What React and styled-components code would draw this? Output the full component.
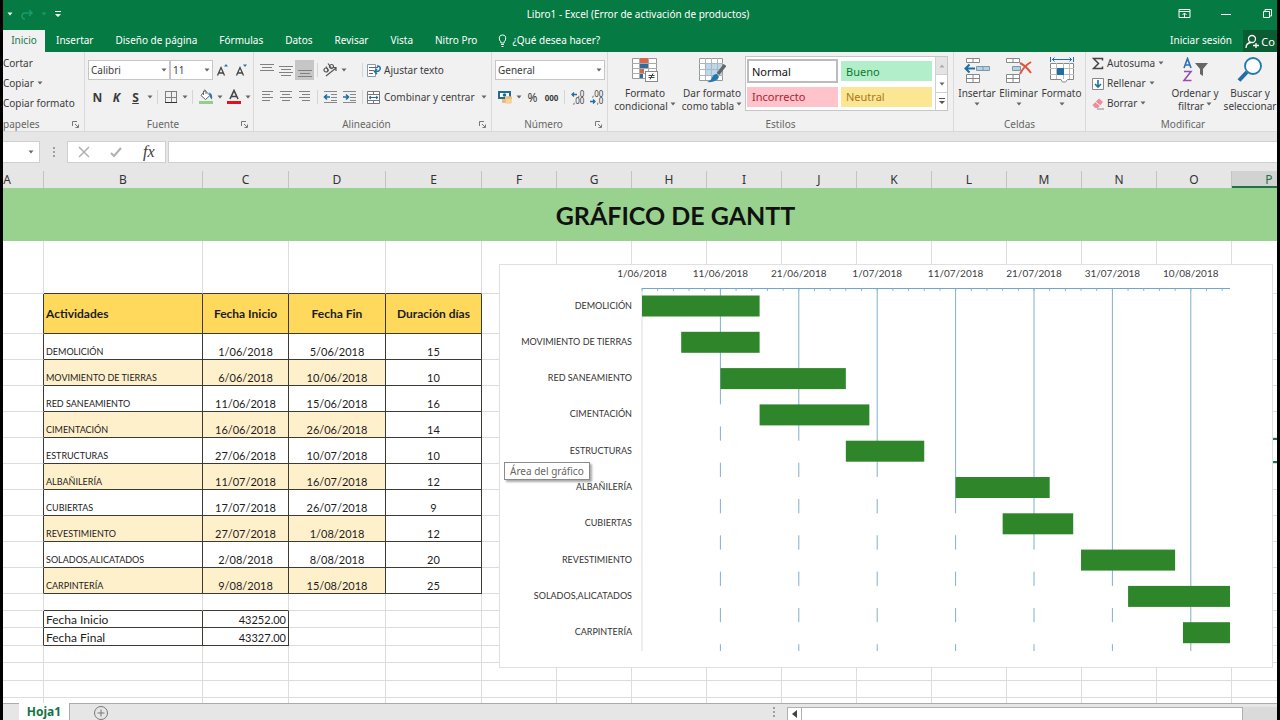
import styled, { createGlobalStyle, css } from 'styled-components';
import { useState } from 'react';

const GlobalStyle = createGlobalStyle`
  * {
    box-sizing: border-box;
  }

  body {
    margin: 0;
    background: #000;
    font-family: "Noto Sans", "Open Sans", sans-serif;
    font-size: 10px;
    color: #3c3c3c;
  }

  button, select, input {
    font: inherit;
    color: inherit;
  }
`;

const Window = styled.div`
  display: flex;
  flex-direction: column;
  height: 100vh;
  overflow: hidden;
  border: 0 solid #000;
  border-width: 0 3px;
  background: #e6e6e6;
`;

const PlainButton = styled.button`
  display: inline-flex;
  align-items: center;
  justify-content: center;
  padding: 0;
  border: 0;
  background: transparent;
  white-space: nowrap;
`;

/* title bar and tabs */

const TitleBar = styled.header`
  display: grid;
  grid-template-columns: 1fr auto 1fr;
  align-items: center;
  flex: none;
  height: 30px;
  padding: 0 4px 2px 0;
  background: #057a43;
  color: #fff;
`;

const QuickAccess = styled.div`
  display: flex;
  align-items: center;
  gap: 8px;
  padding-left: 4px;
`;

const WindowTitle = styled.h1`
  margin: 0;
  font-size: 10px;
  font-weight: normal;
`;

const WindowControls = styled.div`
  display: flex;
  justify-content: flex-end;
  gap: 28px;
`;

const TabBar = styled.nav`
  display: flex;
  flex: none;
  height: 22px;
  background: #057a43;
  color: #fff;
`;

const Tab = styled(PlainButton)`
  padding: 0 11px 2px;

  ${(props) => props.$active && css`
    width: 42px;
    padding: 0 0 2px;
    background: #f1f1f1;
    color: #18794a;
  `}
`;

const TellMe = styled(PlainButton)`
  gap: 5px;
  margin: 0 auto 0 10px;
  padding-bottom: 2px;
`;

const ShareButton = styled(PlainButton)`
  gap: 2px;
  width: 34px;
  background: #0b5c33;
  font-size: 11px;
`;

/* ribbon */

const Ribbon = styled.div`
  display: flex;
  flex: none;
  height: 80px;
  overflow: hidden;
  background: #f1f1f1;
  border-bottom: 1px solid #d8d8d8;
`;

const GroupBox = styled.section`
  display: flex;
  flex-direction: column;
  flex: ${(props) => (props.$width ? `0 0 ${props.$width}px` : '1 0 auto')};
  min-width: 0;
  padding: 1px 3px 0;
  border-right: 1px solid #d9d9d9;

  &:first-child {
    padding-left: 0;
    text-align: left;
  }

  &:last-child {
    padding-right: 0;
    border-right: 0;
  }
`;

const GroupContent = styled.div`
  display: flex;
  flex: 1;
`;

const GroupFooter = styled.div`
  display: flex;
  align-items: center;
  height: 14px;
  line-height: 14px;
  color: #666;

  button {
    width: 12px;
  }
`;

const GroupLabel = styled.span`
  flex: 1;
  text-align: ${(props) => (props.$start ? 'left' : 'center')};
`;

const Stack = styled.div`
  display: flex;
  flex-direction: column;
  justify-content: space-between;
  flex: 1;
  padding: 7px 0 10px;
`;

const List = styled.div`
  display: flex;
  flex-direction: column;
  flex: 1;
  padding-left: ${(props) => props.$indent || 0}px;
`;

const ToolRow = styled.div`
  display: flex;
  align-items: center;
  height: 20px;
`;

const Tool = styled(PlainButton)`
  flex: none;
  width: ${(props) => props.$width || 19}px;
  height: 20px;
  background: ${(props) => (props.$pressed ? '#c6c6c6' : 'transparent')};
`;

const SplitTool = styled(Tool)`
  justify-content: flex-start;
  gap: 3px;
  padding-left: 1px;
`;

const LetterTool = styled(Tool)`
  font-size: 12px;
  font-weight: ${(props) => (props.$bold ? 'bold' : 'normal')};
  font-style: ${(props) => (props.$italic ? 'italic' : 'normal')};
  text-decoration: ${(props) => (props.$underline ? 'underline' : 'none')};
`;

const ThousandsTool = styled(Tool)`
  font-size: 8px;
  font-weight: bold;
`;

const ListTool = styled(PlainButton)`
  gap: 3px;
  justify-content: flex-start;
  height: 20px;
`;

const Divider = styled.span`
  flex: none;
  width: 1px;
  height: 14px;
  margin: 0 3px;
  background: #d5d5d5;
`;

const SelectBox = styled.label`
  display: inline-grid;
  align-items: center;
  flex: none;
  width: ${(props) => props.$width}px;
  height: 20px;

  select, svg {
    grid-area: 1 / 1;
  }

  select {
    width: 100%;
    height: 20px;
    padding: 0 2px;
    border: 1px solid #c6c6c6;
    border-radius: 0;
    background: #fff;
    appearance: none;
  }

  svg {
    justify-self: end;
    margin-right: 3px;
    pointer-events: none;
  }
`;

const LargeTool = styled(PlainButton)`
  flex: none;
  flex-direction: column;
  justify-content: flex-start;
  width: ${(props) => props.$width}px;
  padding-top: 4px;

  svg:first-child {
    margin-bottom: 3px;
  }
`;

const LargeLine = styled.span`
  display: flex;
  align-items: center;
  gap: 2px;
  height: 13px;
`;

const Gallery = styled.div`
  display: grid;
  grid-template-columns: 1fr 1fr 12px;
  grid-template-rows: 1fr 1fr;
  gap: 2px 3px;
  width: 203px;
  height: 55px;
  margin-top: 3px;
  padding: 2px 0 2px 1px;
  border: 1px solid #c6c6c6;
  background: #fff;
`;

const styleColors = {
  normal: css`background: #fff; color: #111; box-shadow: 0 0 0 2px #bcbcbc inset;`,
  good: css`background: #b3eecb; color: #0b7a2c;`,
  bad: css`background: #ffc3cb; color: #b3202e;`,
  neutral: css`background: #fbe694; color: #a9791b;`,
};

const StyleItem = styled(PlainButton)`
  justify-content: flex-start;
  align-self: center;
  height: ${(props) => (props.$kind === 'normal' ? 24 : 20)}px;
  padding: 0 5px;
  font-size: 11px;
  ${(props) => styleColors[props.$kind]}
`;

const GalleryScroll = styled.div`
  display: flex;
  flex-direction: column;
  grid-column: 3;
  grid-row: 1 / 3;
  margin: -2px 0;
  border-left: 1px solid #d0d0d0;
`;

const ScrollButton = styled(PlainButton)`
  flex: 1;
  border-bottom: 1px solid #d0d0d0;
  background: ${(props) => (props.disabled ? '#e4e4e4' : '#fff')};

  &:last-child {
    border-bottom: 0;
  }
`;

/* formula bar */

const FormulaBar = styled.div`
  display: flex;
  align-items: center;
  flex: none;
  height: 39px;
`;

const NameBox = styled(PlainButton)`
  justify-content: flex-end;
  width: 37px;
  height: 22px;
  padding-right: 5px;
  border: 1px solid #cfcfcf;
  border-left: 0;
  background: #fff;
`;

const Grip = styled.span`
  display: flex;
  align-items: center;
  justify-content: center;
  width: 27px;
`;

const FormulaButtons = styled.div`
  display: flex;
  width: 99px;
  height: 22px;
  border: 1px solid #cfcfcf;
  background: #fff;

  button {
    flex: 1;
  }
`;

const FxButton = styled(PlainButton)`
  font-family: "Liberation Serif", serif;
  font-size: 16px;
  font-style: italic;
`;

const FormulaInput = styled.input`
  flex: 1;
  min-width: 0;
  height: 22px;
  margin-left: 2px;
  border: 1px solid #cfcfcf;
  border-right: 0;
  background: #fff;
`;

/* worksheet */

const SheetArea = styled.main`
  position: relative;
  flex: 1;
  min-height: 0;
  overflow: hidden;
  background: #fff;
  font-family: Lato, "Open Sans", sans-serif;
  color: #1c1c1c;
`;

// scrolled a little to the right, so column A starts outside the window
const Grid = styled.table`
  width: 1336px;
  margin-left: -32px;
  table-layout: fixed;
  border-collapse: separate;
  border-spacing: 0;
`;

const ColumnHeader = styled.th`
  height: 17px;
  padding: 0;
  border-right: 1px solid #c3c3c3;
  background: #e6e6e6;
  font-family: "Noto Sans", sans-serif;
  font-size: 12px;
  font-weight: normal;
  line-height: 16px;
  color: #333;

  ${(props) => props.$selected && css`
    background: #d2d2d2;
    color: #217346;
    box-shadow: 0 -2px 0 #217346 inset;
  `}
`;

const TitleCell = styled.td`
  height: 53px;
  padding: 0;
  background: #99d18f;
  font-size: 25px;
  font-weight: bold;
  text-align: center;
  color: #111;
`;

const Cell = styled.td`
  height: ${(props) => props.$height}px;
  padding: 0 2px;
  border-right: 1px solid ${(props) => (props.$darkRight ? '#3c3a33' : '#dcdcdc')};
  border-bottom: 1px solid ${(props) => (props.$darkBottom ? '#3c3a33' : '#dcdcdc')};
  background: ${(props) => props.$fill || '#fff'};
  font-size: ${(props) => props.$size || 12}px;
  font-weight: ${(props) => (props.$bold ? 'bold' : 'normal')};
  line-height: 15px;
  text-align: ${(props) => props.$align || 'left'};
  vertical-align: ${(props) => (props.$bold ? 'middle' : 'bottom')};
  white-space: nowrap;
  ${(props) => props.$active && css`box-shadow: 0 0 0 2px #217346 inset;`}
`;

const ChartFrame = styled.figure`
  position: absolute;
  left: 496px;
  top: 93px;
  width: 774px;
  height: 404px;
  margin: 0;
  border: 1px solid #e0e0e0;
  background: #fff;

  svg {
    display: block;
  }
`;

const AxisText = styled.text`
  font-size: 10px;
  fill: #404040;
`;

const CategoryText = styled.text`
  font-size: 9px;
  fill: #333;
`;

const Tooltip = styled.div`
  position: absolute;
  left: 501px;
  top: 291px;
  height: 18px;
  padding: 0 5px;
  border: 1px solid #8a8a8a;
  background: #fff;
  box-shadow: 2px 2px 2px #0005;
  font-family: "Noto Sans", sans-serif;
  font-size: 10px;
  line-height: 16px;
  color: #666;
`;

/* sheet tabs */

const SheetBar = styled.footer`
  display: flex;
  flex: none;
  height: 17px;
  border-top: 1px solid #ababab;
`;

const SheetTab = styled(PlainButton)`
  width: 51px;
  margin: -1px 23px 0 16px;
  background: #fff;
  border-right: 1px solid #ababab;
  font-size: 12px;
  font-weight: bold;
  color: #127345;
`;

const Spacer = styled.span`
  flex: 1;
`;

const ScrollBar = styled.div`
  display: flex;
  width: 490px;
  margin-top: 3px;
  background: #dadada;
`;

const ScrollThumb = styled.span`
  width: 442px;
  border: 1px solid #b0b0b0;
  border-bottom: 0;
  background: #fff;
`;

const ScrollStep = styled(PlainButton)`
  width: 14px;
  border: 1px solid #b0b0b0;
  border-width: 1px 0 0 1px;
  background: #fff;
`;

const Arrow = ({ color = '#666', up }) => (
  <svg width="6" height="4" viewBox="0 0 6 4" aria-hidden="true">
    <path d={up ? 'M0.5 3.5h5L3 0.5z' : 'M0.5 0.5h5L3 3.5z'} fill={color} />
  </svg>
);

const Launcher = () => (
  <svg width="7" height="7" viewBox="0 0 7 7" fill="none" stroke="#777">
    <path d="M0.5 5V0.5H5M3 3l3 3M6.5 3.5v3h-3" />
  </svg>
);

const Dots = () => (
  <svg width="2" height="10" fill="#a0a0a0">
    <rect x="0" y="0" width="2" height="2" />
    <rect x="0" y="4" width="2" height="2" />
    <rect x="0" y="8" width="2" height="2" />
  </svg>
);

// horizontal strokes given as [x, width], one for each line of text
const LinesIcon = ({ lines, top = 1, gap = 3 }) => (
  <svg width="14" height="14" fill="#808080">
    {lines.map(([x, w], i) => <rect key={i} x={x} y={top + i * gap} width={w} height="1" />)}
  </svg>
);

const GrowIcon = ({ down }) => (
  <svg width="15" height="15" fill="none">
    <path d="M2.500 12.500L6 4.500L9.500 12.500M4 10h4" stroke="#444" strokeWidth="1.300" />
    <path d={down ? 'M9 1.500h4l-2 2.500z' : 'M9 3.500h4l-2-2.500z'} fill="#2f6f9f" />
  </svg>
);

const BordersIcon = () => (
  <svg width="14" height="14" fill="none" stroke="#808080">
    <path d="M1 1.500h12M1 7.500h12M1.500 1v12M7.500 1v12M12.500 1v12" />
    <path d="M1 12.500h12" stroke="#333" />
  </svg>
);

const FillIcon = () => (
  <svg width="16" height="16" fill="none">
    <path d="M7 1.500L12 6.500 7.500 10.500 3 6.500z" fill="#fff" stroke="#666" />
    <path d="M5.500 6V2q1-2 2.500 0v3" stroke="#666" />
    <path d="M11 3.500q4 1 3 7q-2-1-2.500-5" fill="#2e75b6" />
    <rect x="1" y="12" width="14" height="3" fill="#92cf87" />
  </svg>
);

const FontColorIcon = () => (
  <svg width="16" height="16" fill="none">
    <path d="M4 10L8 1.500L12 10M5.500 7.500h5" stroke="#444" strokeWidth="1.600" />
    <rect x="1" y="12" width="14" height="3" fill="#e0121b" />
  </svg>
);

const OrientationIcon = () => (
  <svg width="16" height="16" fill="none" stroke="#555" strokeWidth="1.200">
    <circle cx="4" cy="8" r="2" />
    <path d="M4 4.500l2.500 4.500M6 1.500l4 5.500" />
    <circle cx="9.500" cy="4.500" r="2" />
    <path d="M4 14L14 6M10.500 5.500h3.500v3.500" />
  </svg>
);

const IndentIcon = ({ right }) => (
  <svg width="15" height="14" fill="none" stroke="#888">
    <path d="M1 1.500h13M8 4.500h6M8 7.500h6M8 10.500h6M1 12.500h13" />
    <path d={right ? 'M1 7h5M4 4.500L6.500 7 4 9.500' : 'M7 7H2M4 4.500L1.500 7 4 9.500'} stroke="#1c6ea4" strokeWidth="1.600" />
  </svg>
);

const WrapIcon = () => (
  <svg width="15" height="15" fill="none">
    <path d="M1.500 1.500h8v12h-8z" fill="#fff" stroke="#8a9aa5" />
    <path d="M3 4.500h9M3 7.500h5M3 10.500h4" stroke="#667" />
    <path d="M11 3q4 0 3 3.500q-1 2.500-5 2M11 6L8.500 8.500l2.500 2.500" stroke="#1c6ea4" strokeWidth="1.500" />
  </svg>
);

const MergeIcon = () => (
  <svg width="15" height="15" fill="none">
    <path d="M1.500 1.500h12v12h-12zM1 4.500h13M1 10.500h13M7.500 1v3M7.500 11v3" fill="#fff" stroke="#777" />
    <path d="M3 7.500h9M5 6L3 7.500 5 9M10 6l2 1.500L10 9" stroke="#1c6ea4" />
  </svg>
);

const CurrencyIcon = () => (
  <svg width="16" height="16">
    <rect x="1" y="2" width="13" height="8" fill="#1f6c96" />
    <rect x="3" y="4" width="9" height="4" fill="#fff" />
    <circle cx="7.500" cy="6" r="1.800" fill="#1f6c96" />
    <path d="M8 8h7v6q-3.500 2-7 0z" fill="#f7d3a1" />
    <ellipse cx="11.500" cy="8.500" rx="3.500" ry="1.500" fill="#edbb7b" />
    <path d="M5 10h4v4H5z" fill="#edbb7b" />
  </svg>
);

const DecimalsText = styled.span`
  display: grid;
  font-size: 8px;
  line-height: 7px;
  text-align: right;

  svg {
    margin-right: 1px;
  }
`;

const TinyArrow = ({ right }) => (
  <svg width="6" height="5" fill="none" stroke="#1c6ea4" strokeWidth="1.300">
    <path d={right ? 'M0 2.500h5M3 0.500l2 2-2 2' : 'M6 2.500H1M3 0.500l-2 2 2 2'} />
  </svg>
);

const ConditionalIcon = () => (
  <svg width="28" height="26" fill="none">
    <path d="M1.500 1.500h24v20h-24z" fill="#fff" stroke="#999" />
    <path d="M9 1h5v5H9zM9 11h4v5H9z" fill="#d9654b" />
    <path d="M9 6h8v5H9zM9 16h3v5H9z" fill="#2b6f9e" />
    <path d="M14 1h3v5h-3z" fill="#d9654b" />
    <path d="M1 6.500h25M1 11.500h25M1 16.500h25M8.500 1v20M17.500 1v20" stroke="#aaa" />
    <rect x="14.500" y="14.500" width="12" height="10" fill="#fff" stroke="#888" />
    <path d="M17.500 18.500h6M17.500 20.500h6M22 16.500l-3 6" stroke="#444" />
  </svg>
);

const TableFormatIcon = () => (
  <svg width="28" height="26" fill="none">
    <path d="M1.500 1.500h23v22h-23z" fill="#fff" stroke="#999" />
    <path d="M8 7h16v12H8z" fill="#bcd7ea" />
    <path d="M1 6.500h24M1 12.500h24M1 18.500h24M7.500 1v22M13.500 1v22M19.500 1v22" stroke="#a9b8c3" />
    <path d="M27 8l-7 9" stroke="#666" strokeWidth="3.500" />
    <path d="M19 17q-4 0-5 3.500T9 25q9 1 12-5z" fill="#1f78b4" />
  </svg>
);

const InsertIcon = () => (
  <svg width="28" height="26" fill="none">
    <path d="M3.500 1.500h13v4h-13zM10 1v4M3.500 17.500h13v8h-13zM3 21.500h14M10 17v8" fill="#fff" stroke="#888" />
    <path d="M13.500 9.500h13v4h-13zM20 9v5" fill="#b5d0e2" stroke="#7b98aa" />
    <path d="M12 11.500H2.500M6.500 7.500l-4 4 4 4" stroke="#1f6fa5" strokeWidth="2" />
  </svg>
);

const DeleteIcon = () => (
  <svg width="28" height="26" fill="none">
    <path d="M1.500 1.500h13v4h-13zM8 1v4M1.500 17.500h13v8h-13zM1 21.500h14M8 17v8" fill="#fff" stroke="#888" />
    <path d="M7.500 9.500h8v4h-8z" fill="#b5d0e2" stroke="#7b98aa" />
    <path d="M15 6q6 3 11 10M26 5q-7 4-11 12" stroke="#e0583b" strokeWidth="2" />
  </svg>
);

const FormatIcon = () => (
  <svg width="28" height="26" fill="none">
    <path d="M2.500 6.500h23v16h-6l-2 2.500h-3l-1.500-2.500h-10.500z" fill="#fff" stroke="#888" />
    <path d="M2 11.500h24M2 17.500h24M8.500 6v16M15.500 6v16M21.500 6v16" stroke="#bbb" />
    <rect x="9" y="11" width="7" height="7" fill="#1f6fa5" />
    <path d="M4 2.500h20M6.500 0.500l-2 2 2 2M21.500 0.500l2 2-2 2M2.500 0v5M25.500 0v5" stroke="#1f6fa5" />
  </svg>
);

const SigmaIcon = () => (
  <svg width="12" height="13" fill="none" stroke="#444" strokeWidth="1.500">
    <path d="M10.500 3.500V1.500H1.500l5 5-5 5h9v-2" />
  </svg>
);

const FillDownIcon = () => (
  <svg width="12" height="13" fill="none">
    <path d="M0.500 1.500h11v11H0.500z" fill="#fff" stroke="#888" />
    <path d="M6 3v7M3 7l3 3 3-3" stroke="#1f6fa5" strokeWidth="1.600" />
  </svg>
);

const EraserIcon = () => (
  <svg width="12" height="13" fill="none">
    <path d="M7 1.500l4 3.500-5 6H3L0.500 8z" fill="#f28a9b" />
    <path d="M3.500 5L8 8.500" stroke="#fff" />
    <path d="M5 12h7" stroke="#888" />
  </svg>
);

const SortIcon = () => (
  <svg width="28" height="26" fill="none">
    <path d="M3 11L6.500 1.500L10 11M4 8h5" stroke="#2a72b0" strokeWidth="1.600" />
    <path d="M3 14.500h7L3 23.500h7.500" stroke="#9a4bb0" strokeWidth="1.600" />
    <path d="M14 6h13l-5 6v7l-3-2v-5z" fill="#666" />
  </svg>
);

const FindIcon = () => (
  <svg width="28" height="26" fill="none">
    <path d="M11 15L3 23.500" stroke="#1f6fa5" strokeWidth="4" />
    <circle cx="17" cy="9" r="8" fill="#fff" stroke="#1f7bb0" strokeWidth="1.800" />
  </svg>
);

const Group = ({ label, width, start, launcher, children }) => (
  <GroupBox $width={width} aria-label={label}>
    <GroupContent>{children}</GroupContent>
    <GroupFooter>
      <GroupLabel $start={start}>{label}</GroupLabel>
      {launcher && <PlainButton aria-label={`Opciones de ${label}`}><Launcher /></PlainButton>}
    </GroupFooter>
  </GroupBox>
);

const Dropdown = ({ label, width, options }) => (
  <SelectBox $width={width}>
    <select aria-label={label} defaultValue={options[0]}>
      {options.map((el) => <option key={el}>{el}</option>)}
    </select>
    <Arrow />
  </SelectBox>
);

const ArrowTool = () => <Tool $width={9} aria-label="Más opciones"><Arrow /></Tool>;

const Large = ({ icon, lines, width }) => (
  <LargeTool $width={width}>
    {icon}
    {lines.map((line, i) => (
      <LargeLine key={i}>
        {line}
        {i === lines.length - 1 && <Arrow />}
      </LargeLine>
    ))}
  </LargeTool>
);

const tabs = ['Inicio', 'Insertar', 'Diseño de página', 'Fórmulas', 'Datos', 'Revisar', 'Vista', 'Nitro Pro'];

const columns = [
  ['A', 73], ['B', 159], ['C', 86], ['D', 97], ['E', 96], ['F', 75], ['G', 75], ['H', 75],
  ['I', 75], ['J', 75], ['K', 75], ['L', 75], ['M', 75], ['N', 75], ['O', 75], ['P', 75],
];

const tasks = [
  { name: 'DEMOLICIÓN', start: '1/06/2018', end: '5/06/2018', days: 15, offset: 0 },
  { name: 'MOVIMIENTO DE TIERRAS', start: '6/06/2018', end: '10/06/2018', days: 10, offset: 5 },
  { name: 'RED SANEAMIENTO', start: '11/06/2018', end: '15/06/2018', days: 16, offset: 10 },
  { name: 'CIMENTACIÓN', start: '16/06/2018', end: '26/06/2018', days: 14, offset: 15 },
  { name: 'ESTRUCTURAS', start: '27/06/2018', end: '10/07/2018', days: 10, offset: 26 },
  { name: 'ALBAÑILERÍA', start: '11/07/2018', end: '16/07/2018', days: 12, offset: 40 },
  { name: 'CUBIERTAS', start: '17/07/2018', end: '26/07/2018', days: 9, offset: 46 },
  { name: 'REVESTIMIENTO', start: '27/07/2018', end: '1/08/2018', days: 12, offset: 56 },
  { name: 'SOLADOS,ALICATADOS', start: '2/08/2018', end: '8/08/2018', days: 20, offset: 62 },
  { name: 'CARPINTERÍA', start: '9/08/2018', end: '15/08/2018', days: 25, offset: 69 },
];

const axisDates = ['1/06/2018', '11/06/2018', '21/06/2018', '1/07/2018', '11/07/2018', '21/07/2018', '31/07/2018', '10/08/2018'];

// every row under the title: its height and the cells that hold something
const rows = [
  { height: 53, cells: [] },
  { height: 40, bold: true, cells: ['Actividades', 'Fecha Inicio', 'Fecha Fin', 'Duración días'] },
  ...tasks.map((task, i) => ({
    height: 26,
    task: true,
    shaded: i % 2 === 1,
    cells: [task.name, task.start, task.end, task.days],
  })),
  { height: 17, cells: [] },
  { height: 17, cells: ['Fecha Inicio', '43252.00'] },
  { height: 18, cells: ['Fecha Final', '43327.00'] },
  { height: 17, cells: [] },
  { height: 18, cells: [] },
  { height: 17, cells: [] },
  { height: 18, cells: [] },
];

const getFill = (row, col) => {
  if (col < 1 || col > row.cells.length) return '#fff';
  if (row.bold) return '#ffd95c';
  return row.shaded && col < 4 ? '#fff0cc' : '#fff';
};

const getAlign = (row, col) => {
  if (col === 1) return 'left';
  return row.cells.length === 2 ? 'right' : 'center';
};

const getSize = (row, col) => {
  if (row.bold) return 12;
  if (col > 1) return 11;
  return row.task ? 9 : 12;
};

const Worksheet = () => (
  <Grid>
    <colgroup>
      {columns.map(([name, width]) => <col key={name} style={{ width }} />)}
    </colgroup>
    <thead>
      <tr>
        {columns.map(([name]) => <ColumnHeader key={name} $selected={name === 'P'}>{name}</ColumnHeader>)}
      </tr>
    </thead>
    <tbody>
      <tr>
        <TitleCell />
        <TitleCell colSpan={15}>GRÁFICO DE GANTT</TitleCell>
      </tr>
      {rows.map((row, r) => {
        const below = rows[r + 1] ? rows[r + 1].cells.length : 0;
        return (
          <tr key={r}>
            {columns.map(([name], col) => (
              <Cell
                key={name}
                $height={row.height}
                $bold={row.bold}
                $size={getSize(row, col)}
                $fill={getFill(row, col)}
                $align={getAlign(row, col)}
                $darkRight={row.cells.length > 0 && col <= row.cells.length}
                $darkBottom={col > 0 && col <= Math.max(row.cells.length, below)}
                $active={name === 'P' && row.cells[0] === 'ESTRUCTURAS'}
              >
                {col > 0 ? row.cells[col - 1] : null}
              </Cell>
            ))}
          </tr>
        );
      })}
    </tbody>
  </Grid>
);

const GanttChart = () => {
  const left = 142;
  const top = 23;
  const width = 588;
  const day = width / 75;
  const step = 36.3;

  return (
    <ChartFrame>
      <svg width="772" height="402" role="img" aria-label="Gráfico de Gantt">
        {axisDates.map((date, i) => (
          <g key={date}>
            <AxisText x={left + i * 10 * day} y="12" textAnchor="middle">{date}</AxisText>
            <path d={`M${left + i * 10 * day} ${top}V${top + 363}`} stroke={i === 0 ? '#dcdcdc' : '#7fb0cc'} />
          </g>
        ))}
        {Array.from({ length: 38 }, (_, i) => (
          <path key={i} d={`M${left + i * 2 * day} ${top}v3`} stroke="#8db8d2" />
        ))}
        <path d={`M${left} ${top + 0.5}h${width}`} stroke="#6fa8cc" />
        {tasks.map((task, i) => {
          const y = top + 7.5 + i * step;
          return (
            <g key={task.name}>
              <CategoryText x={left - 10} y={y + 13} textAnchor="end">{task.name}</CategoryText>
              <rect x={left + 1} y={y} width={Math.max(task.offset * day - 2, 0)} height="22" fill="#fff" />
              <rect
                x={left + task.offset * day}
                y={y}
                width={Math.min(task.days, 75 - task.offset) * day}
                height="21"
                fill="#2f862a"
              />
            </g>
          );
        })}
      </svg>
    </ChartFrame>
  );
};

const App = () => {
  const [currentTab, setCurrentTab] = useState(0);

  return (
    <Window>
      <GlobalStyle />
      <TitleBar>
        <QuickAccess>
          <PlainButton aria-label="Deshacer"><Arrow color="#fff" /></PlainButton>
          <PlainButton aria-label="Rehacer">
            <svg width="12" height="11" fill="none" stroke="#1b9a6c" strokeWidth="1.500">
              <path d="M11 4H4Q1 4 1 7t3 3M8 1l3 3-3 3" />
            </svg>
          </PlainButton>
          <Arrow color="#2a9465" />
          <PlainButton aria-label="Personalizar">
            <svg width="6" height="7" fill="#fff"><path d="M0 0h6v1H0zM0 3h6L3 6z" /></svg>
          </PlainButton>
        </QuickAccess>
        <WindowTitle>Libro1 - Excel (Error de activación de productos)</WindowTitle>
        <WindowControls>
          <PlainButton aria-label="Opciones de presentación">
            <svg width="13" height="10" fill="none" stroke="#fff">
              <path d="M1 0.500h11v8H1zM1 2.500h11M6.500 8V4M4.500 6l2-2 2 2" />
            </svg>
          </PlainButton>
          <PlainButton aria-label="Minimizar">
            <svg width="14" height="10" stroke="#fff"><path d="M2 5.500h10" /></svg>
          </PlainButton>
          <PlainButton aria-label="Restaurar">
            <svg width="12" height="10" fill="none" stroke="#fff">
              <path d="M2.500 2.500h6v6h-6zM4 2V0.500h6.500V7H9" />
            </svg>
          </PlainButton>
        </WindowControls>
      </TitleBar>
      <TabBar>
        {tabs.map((el, index) => (
          <Tab key={el} $active={index === currentTab} onClick={() => setCurrentTab(index)}>{el}</Tab>
        ))}
        <TellMe>
          <svg width="9" height="13" fill="none" stroke="#fff">
            <path d="M3 9Q3 7.500 1.500 6Q0.500 1 4.500 1T7.500 6Q6 7.500 6 9zM3 10.500h3M3.500 12.500h2" />
          </svg>
          ¿Qué desea hacer?
        </TellMe>
        <Tab>Iniciar sesión</Tab>
        <ShareButton>
          <svg width="14" height="15" fill="none" stroke="#fff" strokeWidth="1.300">
            <circle cx="7" cy="5" r="3.500" />
            <path d="M1 14q0-5 5-5.500M8 11.500h6M11 9v5" />
          </svg>
          Co
        </ShareButton>
      </TabBar>

      <Ribbon>
        <Group label="papeles" width={82} start launcher>
          <List>
            <ListTool>Cortar</ListTool>
            <ListTool>Copiar <Arrow /></ListTool>
            <ListTool>Copiar formato</ListTool>
          </List>
        </Group>
        <Group label="Fuente" width={169} launcher>
          <Stack>
            <ToolRow>
              <Dropdown label="Fuente" width={82} options={['Calibri', 'Arial']} />
              <Dropdown label="Tamaño" width={43} options={['11', '12', '14']} />
              <Tool aria-label="Aumentar tamaño"><GrowIcon /></Tool>
              <Tool aria-label="Disminuir tamaño"><GrowIcon down /></Tool>
            </ToolRow>
            <ToolRow>
              <LetterTool $bold>N</LetterTool>
              <LetterTool $bold $italic>K</LetterTool>
              <LetterTool $bold $underline>S</LetterTool>
              <ArrowTool />
              <Divider />
              <Tool aria-label="Bordes"><BordersIcon /></Tool>
              <ArrowTool />
              <Divider />
              <Tool aria-label="Color de relleno"><FillIcon /></Tool>
              <ArrowTool />
              <Tool aria-label="Color de fuente"><FontColorIcon /></Tool>
              <ArrowTool />
            </ToolRow>
          </Stack>
        </Group>
        <Group label="Alineación" width={238} launcher>
          <Stack>
            <ToolRow>
              <Tool aria-label="Alinear arriba"><LinesIcon top={1} lines={[[0, 14], [2, 10], [0, 14]]} /></Tool>
              <Tool aria-label="Alinear en medio"><LinesIcon top={3} lines={[[0, 14], [2, 10], [0, 14], [2, 10]]} /></Tool>
              <Tool $pressed aria-label="Alinear abajo"><LinesIcon top={7} lines={[[0, 14], [2, 10], [0, 14]]} /></Tool>
              <Divider />
              <SplitTool $width={38} aria-label="Orientación"><OrientationIcon /><Arrow /></SplitTool>
              <Divider />
              <ListTool><WrapIcon />Ajustar texto</ListTool>
            </ToolRow>
            <ToolRow>
              <Tool aria-label="Alinear a la izquierda"><LinesIcon lines={[[2, 11], [2, 8], [2, 11], [2, 8]]} /></Tool>
              <Tool aria-label="Centrar"><LinesIcon lines={[[1, 12], [3, 8], [1, 12], [3, 8]]} /></Tool>
              <Tool aria-label="Alinear a la derecha"><LinesIcon lines={[[1, 11], [4, 8], [1, 11], [4, 8]]} /></Tool>
              <Divider />
              <Tool aria-label="Disminuir sangría"><IndentIcon /></Tool>
              <Tool aria-label="Aumentar sangría"><IndentIcon right /></Tool>
              <Divider />
              <ListTool><MergeIcon />Combinar y centrar</ListTool>
              <Tool aria-label="Más opciones"><Arrow /></Tool>
            </ToolRow>
          </Stack>
        </Group>
        <Group label="Número" width={116} launcher>
          <Stack>
            <ToolRow>
              <Dropdown label="Formato de número" width={110} options={['General', 'Moneda']} />
            </ToolRow>
            <ToolRow>
              <Tool aria-label="Moneda"><CurrencyIcon /></Tool>
              <ArrowTool />
              <LetterTool>%</LetterTool>
              <ThousandsTool>000</ThousandsTool>
              <Divider />
              <Tool aria-label="Aumentar decimales">
                <DecimalsText><span><TinyArrow />,0</span><span>,00</span></DecimalsText>
              </Tool>
              <Tool aria-label="Disminuir decimales">
                <DecimalsText><span>,00</span><span><TinyArrow right />,0</span></DecimalsText>
              </Tool>
            </ToolRow>
          </Stack>
        </Group>
        <Group label="Estilos" width={346}>
          <Large width={68} icon={<ConditionalIcon />} lines={['Formato', 'condicional']} />
          <Large width={66} icon={<TableFormatIcon />} lines={['Dar formato', 'como tabla']} />
          <Gallery>
            <StyleItem $kind="normal">Normal</StyleItem>
            <StyleItem $kind="good">Bueno</StyleItem>
            <StyleItem $kind="bad">Incorrecto</StyleItem>
            <StyleItem $kind="neutral">Neutral</StyleItem>
            <GalleryScroll>
              <ScrollButton disabled aria-label="Subir"><Arrow up color="#aaa" /></ScrollButton>
              <ScrollButton aria-label="Bajar"><Arrow /></ScrollButton>
              <ScrollButton aria-label="Más estilos">
                <svg width="6" height="7" fill="#555"><path d="M0 0h6v1H0zM0 3h6L3 6z" /></svg>
              </ScrollButton>
            </GalleryScroll>
          </Gallery>
        </Group>
        <Group label="Celdas" width={132}>
          <Large width={40} icon={<InsertIcon />} lines={['Insertar', '']} />
          <Large width={43} icon={<DeleteIcon />} lines={['Eliminar', '']} />
          <Large width={43} icon={<FormatIcon />} lines={['Formato', '']} />
        </Group>
        <Group label="Modificar">
          <List $indent={3}>
            <ListTool><SigmaIcon />Autosuma <Arrow /></ListTool>
            <ListTool><FillDownIcon />Rellenar <Arrow /></ListTool>
            <ListTool><EraserIcon />Borrar <Arrow /></ListTool>
          </List>
          <Large width={56} icon={<SortIcon />} lines={['Ordenar y', 'filtrar']} />
          <LargeTool $width={54}>
            <FindIcon />
            <LargeLine>Buscar y</LargeLine>
            <LargeLine>seleccionar</LargeLine>
          </LargeTool>
        </Group>
      </Ribbon>

      <FormulaBar>
        <NameBox aria-label="Cuadro de nombres"><Arrow /></NameBox>
        <Grip><Dots /></Grip>
        <FormulaButtons>
          <PlainButton aria-label="Cancelar">
            <svg width="12" height="12" stroke="#b0b0b0" strokeWidth="1.500"><path d="M1 1l10 10M11 1L1 11" /></svg>
          </PlainButton>
          <PlainButton aria-label="Introducir">
            <svg width="12" height="12" fill="none" stroke="#b0b0b0" strokeWidth="2"><path d="M1 7l3 3 7-8" /></svg>
          </PlainButton>
          <FxButton aria-label="Insertar función">fx</FxButton>
        </FormulaButtons>
        <FormulaInput aria-label="Barra de fórmulas" />
      </FormulaBar>

      <SheetArea>
        <Worksheet />
        <GanttChart />
        <Tooltip role="tooltip">Área del gráfico</Tooltip>
      </SheetArea>

      <SheetBar>
        <SheetTab>Hoja1</SheetTab>
        <PlainButton aria-label="Hoja nueva">
          <svg width="16" height="16" fill="none" stroke="#777">
            <circle cx="8" cy="9" r="6.500" />
            <path d="M4.500 9h7M8 5.500v7" />
          </svg>
        </PlainButton>
        <Spacer />
        <Grip><Dots /></Grip>
        <ScrollBar>
          <ScrollStep aria-label="Desplazar a la izquierda">
            <svg width="5" height="8" fill="#444"><path d="M5 0v8L0 4z" /></svg>
          </ScrollStep>
          <ScrollThumb />
        </ScrollBar>
      </SheetBar>
    </Window>
  );
};

export default App;
